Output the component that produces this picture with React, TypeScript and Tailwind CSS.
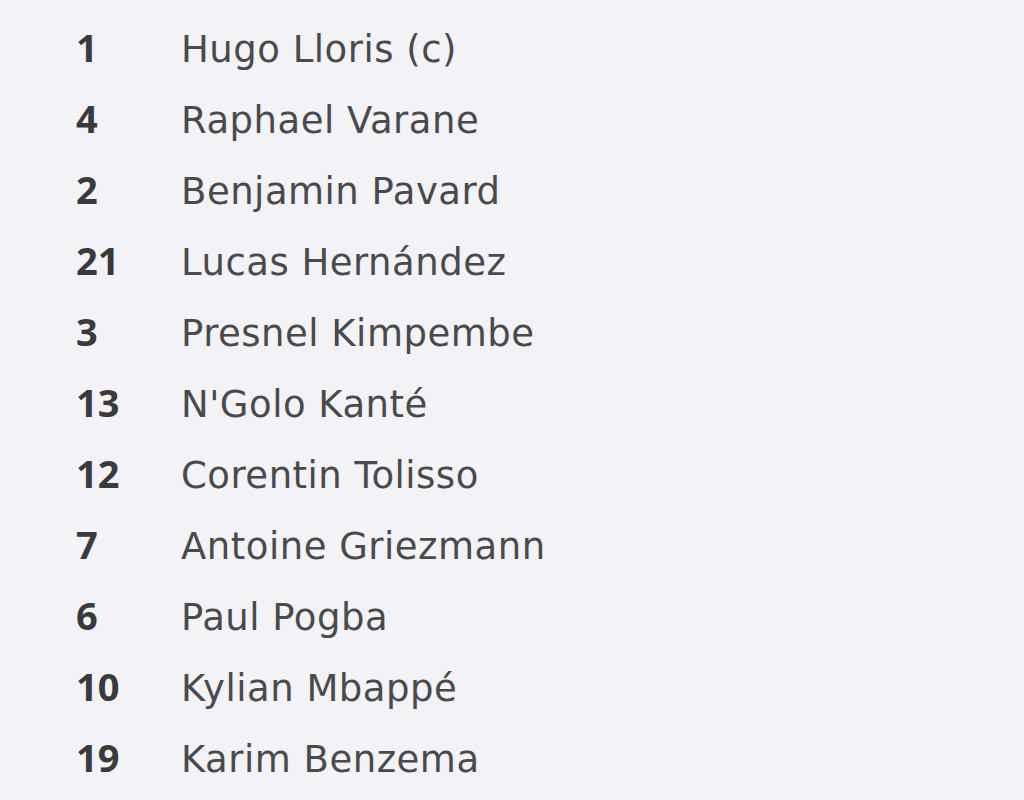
const players = [
  { num: '1', name: 'Hugo Lloris (c)' },
  { num: '4', name: 'Raphael Varane' },
  { num: '2', name: 'Benjamin Pavard' },
  { num: '21', name: 'Lucas Hernández' },
  { num: '3', name: 'Presnel Kimpembe' },
  { num: '13', name: "N'Golo Kanté" },
  { num: '12', name: 'Corentin Tolisso' },
  { num: '7', name: 'Antoine Griezmann' },
  { num: '6', name: 'Paul Pogba' },
  { num: '10', name: 'Kylian Mbappé' },
  { num: '19', name: 'Karim Benzema' },
];

export default function App() {
  return (
    <div className="w-[1024px] h-[800px] overflow-hidden bg-[#f2f2f7] pt-[12px]">
      <ul className="flex flex-col">
        {players.map((p) => (
          <li key={p.num} className="flex items-center h-[71px]">
            <div className="flex items-baseline">
              <span className="w-[105px] pl-[76px] box-content text-[38px] font-bold text-[#3a3a3c] font-['Open_Sans',sans-serif] leading-none">
                {p.num}
              </span>
              <span className="text-[37px] text-[#4a4a4c] font-['DejaVu_Sans',sans-serif] tracking-[0.5px] leading-none">
                {p.name}
              </span>
            </div>
          </li>
        ))}
      </ul>
    </div>
  );
}
